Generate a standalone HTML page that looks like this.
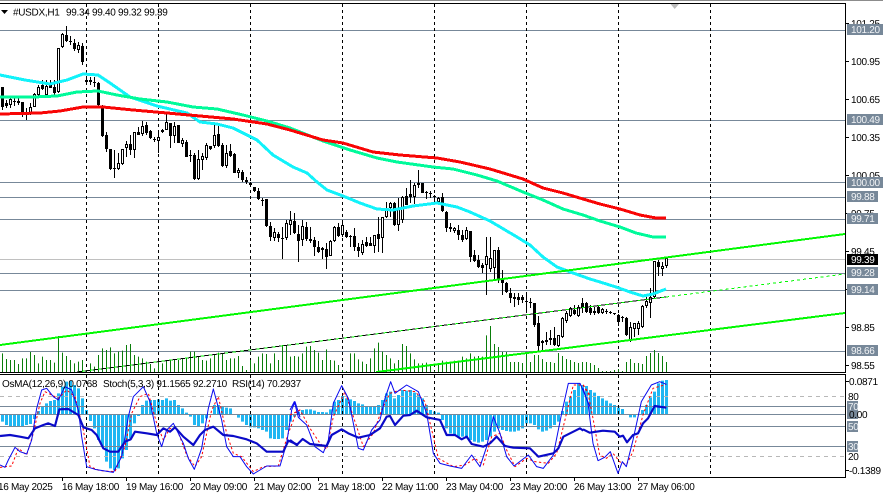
<!DOCTYPE html>
<html><head><meta charset="utf-8"><title>#USDX,H1</title>
<style>html,body{margin:0;padding:0;background:#fff;width:883px;height:494px;overflow:hidden}svg{display:block}text{font-family:"Liberation Sans",sans-serif;font-size:10px;letter-spacing:-.3px;fill:#000;text-rendering:geometricPrecision}.w{fill:#f2f4f6}.c{fill:none;stroke-linejoin:round}.e{shape-rendering:crispEdges}</style>
</head><body>
<svg width="883" height="494" viewBox="0 0 883 494" xmlns="http://www.w3.org/2000/svg">
<defs>
<clipPath id="m"><rect x="0" y="4" width="845" height="368"/></clipPath>
<clipPath id="s"><rect x="0" y="375" width="845" height="102"/></clipPath>
</defs>
<rect x="0" y="0" width="883" height="1" fill="#8c8c8c"/>

<!-- histogram -->
<g clip-path="url(#s)"><g transform="translate(0,340) scale(1,.33333)">
<path fill="none" stroke="#1fb6f2" stroke-width="3" d="M2.5 222V245M6.5 222V255M10.5 222V258M14.5 222V258M18.5 222V258M22.5 222V258M26.5 222V255M30.5 222V252M34.5 222V237M38.5 222V213M42.5 222V200M46.5 222V190M50.5 222V183M54.5 222V180M58.5 222V160M62.5 222V140M66.5 222V125M70.5 222V123M74.5 222V135M78.5 222V145M82.5 222V175M86.5 222V210M90.5 222V243M94.5 222V265M98.5 222V300M102.5 222V320M106.5 222V365M110.5 222V385M114.5 222V390M118.5 222V385M122.5 222V355M126.5 222V330M130.5 222V295M134.5 222V250M138.5 222V228M142.5 222V195M146.5 222V182M150.5 222V180M154.5 222V180M158.5 222V178M162.5 222V180M166.5 222V175M170.5 222V182M174.5 222V180M178.5 222V195M182.5 222V205M186.5 222V218M190.5 222V230M194.5 222V255M198.5 222V258M202.5 222V250M206.5 222V235M214.5 222V195M218.5 222V195M222.5 222V200M226.5 222V203M230.5 222V205M234.5 222V225M238.5 222V233M242.5 222V245M246.5 222V255M250.5 222V262M254.5 222V262M258.5 222V265M262.5 222V270M266.5 222V275M270.5 222V295M274.5 222V297M278.5 222V297M282.5 222V295M286.5 222V270M290.5 222V245M294.5 222V230M298.5 222V215M302.5 222V210M306.5 222V208M310.5 222V208M314.5 222V212M318.5 222V216M322.5 222V216M326.5 222V217M330.5 222V208M334.5 222V185M338.5 222V180M342.5 222V168M346.5 222V175M350.5 222V178M354.5 222V183M358.5 222V190M362.5 222V193M366.5 222V198M370.5 222V200M374.5 222V200M378.5 222V195M382.5 222V180M386.5 222V160M390.5 222V155M394.5 222V175M398.5 222V165M402.5 222V150M406.5 222V152M410.5 222V150M414.5 222V158M418.5 222V165M422.5 222V175M426.5 222V195M430.5 222V210M434.5 222V215M438.5 222V218M442.5 222V240M446.5 222V265M450.5 222V280M454.5 222V285M458.5 222V290M462.5 222V290M466.5 222V295M470.5 222V300M474.5 222V305M478.5 222V308M482.5 222V305M486.5 222V300M490.5 222V290M494.5 222V275M498.5 222V265M502.5 222V270M506.5 222V273M510.5 222V275M514.5 222V275M518.5 222V272M522.5 222V265M526.5 222V250M530.5 222V250M534.5 222V255M538.5 222V268M542.5 222V275M546.5 222V272M550.5 222V265M554.5 222V255M558.5 222V245M562.5 222V213M566.5 222V185M570.5 222V170M574.5 222V150M578.5 222V130M582.5 222V135M586.5 222V138M590.5 222V150M594.5 222V158M598.5 222V168M602.5 222V175M606.5 222V182M610.5 222V190M614.5 222V195M618.5 222V203M622.5 222V207M630.5 222V232M634.5 222V232M638.5 222V225M642.5 222V210M646.5 222V195M650.5 222V172M654.5 222V155M658.5 222V130M662.5 222V122M666.5 222V120"/>
</g></g>

<!-- horizontal levels -->
<g stroke="#778899" stroke-width="1" fill="none">
<path d="M0 30.5H845M0 120.5H845M0 182.5H845M0 197.5H845M0 219.5H845M0 273.5H845M0 290.5H845M0 351.5H845"/>
<path d="M0 406.5H845M0 414.5H845M0 426.5H845M0 446.5H845"/>
</g>
<path d="M0 259.5H845" stroke="#c0c0c0" stroke-width="1" fill="none"/>
<path d="M0 396.5H845M0 456.5H845" stroke="#b8b8b8" stroke-width="1" stroke-dasharray="4 4" fill="none"/>

<!-- vertical separators -->
<path d="M86.5 4V372M158.5 4V372M250.5 4V372M342.5 4V372M434.5 4V372M526.5 4V372M618.5 4V372M710.5 4V372M86.5 375V477M158.5 375V477M250.5 375V477M342.5 375V477M434.5 375V477M526.5 375V477M618.5 375V477M710.5 375V477" stroke="#000" stroke-width="1" stroke-dasharray="3 3" fill="none"/>

<!-- volumes -->
<g clip-path="url(#m)"><g transform="translate(0,340) scale(1,.33333)">
<path fill="none" stroke="#0a7d0a" stroke-width="1" d="M2.5 96V40M6.5 96V57M10.5 96V60M14.5 96V60M18.5 96V72M22.5 96V55M26.5 96V55M30.5 96V36M34.5 96V45M38.5 96V70M42.5 96V50M46.5 96V60M50.5 96V60M54.5 96V68M58.5 96V-12M62.5 96V38M66.5 96V48M70.5 96V60M74.5 96V70M78.5 96V65M82.5 96V60M86.5 96V93M90.5 96V70M94.5 96V80M98.5 96V45M102.5 96V25M106.5 96V30M110.5 96V22M114.5 96V40M118.5 96V35M122.5 96V32M126.5 96V15M130.5 96V12M134.5 96V45M138.5 96V50M142.5 96V55M146.5 96V65M150.5 96V72M154.5 96V85M158.5 96V62M162.5 96V70M166.5 96V62M170.5 96V60M174.5 96V58M178.5 96V60M182.5 96V55M186.5 96V55M190.5 96V35M194.5 96V35M198.5 96V48M202.5 96V60M206.5 96V62M210.5 96V55M214.5 96V42M218.5 96V38M222.5 96V40M226.5 96V60M230.5 96V55M234.5 96V55M238.5 96V48M242.5 96V78M246.5 96V90M250.5 96V60M254.5 96V70M258.5 96V50M262.5 96V40M266.5 96V42M270.5 96V70M274.5 96V40M278.5 96V60M282.5 96V15M286.5 96V15M290.5 96V50M294.5 96V48M298.5 96V50M302.5 96V40M306.5 96V20M310.5 96V18M314.5 96V30M318.5 96V38M322.5 96V60M326.5 96V28M330.5 96V60M334.5 96V62M338.5 96V75M342.5 96V90M346.5 96V93M350.5 96V40M354.5 96V40M358.5 96V58M362.5 96V65M366.5 96V72M370.5 96V55M374.5 96V25M378.5 96V8M382.5 96V35M386.5 96V45M390.5 96V55M394.5 96V70M398.5 96V60M402.5 96V12M406.5 96V18M410.5 96V40M414.5 96V58M418.5 96V70M422.5 96V70M426.5 96V68M430.5 96V72M434.5 96V93M438.5 96V75M442.5 96V62M446.5 96V65M450.5 96V65M454.5 96V62M458.5 96V65M462.5 96V50M466.5 96V55M470.5 96V40M474.5 96V50M478.5 96V48M482.5 96V50M486.5 96V-14M490.5 96V-42M494.5 96V12M498.5 96V21M502.5 96V36M506.5 96V36M510.5 96V66M514.5 96V66M518.5 96V66M522.5 96V69M526.5 96V36M530.5 96V66M534.5 96V45M538.5 96V45M542.5 96V57M546.5 96V66M550.5 96V66M554.5 96V69M558.5 96V39M562.5 96V48M566.5 96V57M570.5 96V60M574.5 96V66M578.5 96V69M582.5 96V66M586.5 96V66M590.5 96V69M594.5 96V75M598.5 96V84M602.5 96V93M606.5 96V93M610.5 96V93M614.5 96V90M618.5 96V87M622.5 96V93M626.5 96V66M630.5 96V57M634.5 96V69M638.5 96V69M642.5 96V72M646.5 96V48M650.5 96V39M654.5 96V30M658.5 96V39M662.5 96V48M666.5 96V66"/>
</g>

<!-- candles -->
<g transform="translate(.5,0)">
<path fill="none" stroke="#000" stroke-width="1" d="M2 87V110M6 100V108M10 98V108M14 98V106M18 98V105M22 102V117M26 108V120M30 103V115M34 93V107M38 85V97M42 80V90M46 80V97M50 80V88M54 80V95M58 48V93M62 33V48M66 26V42M70 36V45M74 39V51M78 42V53M82 43V65M86 78V83M90 77V85M94 77V87M98 82V107M102 105V137M106 132V152M110 149V170M114 150V178M118 153V170M122 149V165M126 141V157M130 135V155M134 132V158M138 127V135M142 121V136M146 122V135M150 130V139M154 137V142M158 132V153M162 129V133M166 113V130M170 123V148M174 122V143M178 125V143M182 138V147M186 140V157M190 150V162M194 153V180M198 150V180M202 153V170M206 143V160M210 146V150M214 125V148M218 125V147M222 143V167M226 145V168M230 144V157M234 153V173M238 168V178M242 170V182M246 177V184M250 182V187M254 187V192M258 188V200M262 198V206M266 199V227M270 222V241M274 228V241M278 232V242M282 227V259M286 220V240M290 211V235M294 213V234M298 225V262M302 220V246M306 222V241M310 227V243M314 237V256M318 241V253M322 247V259M326 243V269M330 240V256M334 226V242M338 223V237M342 222V237M346 230V238M350 235V247M354 228V251M358 243V257M362 240V255M366 237V247M370 237V246M374 235V253M378 217V252M382 217V253M386 202V218M390 202V217M394 202V226M398 198V231M402 196V223M406 188V205M410 180V203M414 183V204M418 170V188M422 183V193M426 191V199M430 191V198M434 195V203M438 197V203M442 193V212M446 211V232M450 223V232M454 227V233M458 225V240M462 230V242M466 227V240M470 231V262M474 250V262M478 255V268M482 263V273M486 237V295M490 237V272M494 250V280M498 247V283M502 270V295M506 282V293M510 288V303M514 293V307M518 293V305M522 295V303M526 292V310M530 298V308M534 303V327M538 316V351M542 340V351M546 332V345M550 330V345M554 327V346M558 335V347M562 317V338M566 311V323M570 307V317M574 305V315M578 305V317M582 298V313M586 302V313M590 305V315M594 307V315M598 306V314M602 308V314M606 309V314M610 311V314M614 313V315M618 314V326M622 316V322M626 317V336M630 322V342M634 323V337M638 321V335M642 305V328M646 297V308M650 288V318M654 261V298M658 260V276M662 262V276M666 258V268"/>
<path fill="none" stroke="#000" stroke-width="3" d="M2 87V107M6 103V106M10 99V105M14 101V102M18 101V103M22 102V113M26 113V114M30 107V113M34 94V107M38 87V95M42 85V89M46 86V95M50 85V88M54 87V93M58 48V92M62 34V47M66 35V41M70 41V42M74 43V49M78 45V50M82 46V62M86 80V82M90 80V82M94 82V83M98 83V105M102 108V136M106 135V149M110 149V169M114 168V169M118 163V169M122 149V164M126 144V148M130 144V150M134 132V150M138 132V135M142 126V134M146 125V133M150 131V138M154 139V140M158 137V141M162 130V132M166 122V130M170 123V136M174 126V136M178 125V143M182 140V144M186 142V157M190 155V156M194 155V179M198 159V179M202 156V160M206 145V158M210 146V149M214 135V146M218 134V146M222 145V166M226 153V166M230 151V156M234 154V173M238 170V173M242 172V180M246 180V182M250 183V185M254 187V191M258 191V199M262 200V201M266 199V226M270 226V237M274 232V238M278 234V238M282 238V239M286 223V238M290 220V225M294 221V233M298 234V241M302 226V240M306 227V239M310 239V241M314 240V247M318 247V252M322 248V250M326 249V257M330 241V256M334 227V241M338 227V236M342 225V235M346 232V237M350 236V237M354 236V247M358 247V251M362 244V253M366 242V246M370 243V246M374 235V246M378 234V239M382 217V238M386 208V217M390 203V208M394 203V225M398 208V225M402 197V220M406 196V205M410 194V197M414 185V197M418 183V185M422 183V193M426 192V193M430 193V194M434 196V197M438 198V202M442 197V211M446 212V228M450 227V229M454 228V231M458 230V235M462 235V240M466 230V239M470 231V257M474 255V261M478 260V267M482 265V268M486 256V265M490 258V269M494 250V268M498 250V279M502 279V283M506 283V292M510 293V298M514 297V299M518 297V300M522 297V300M526 301V302M530 302V303M534 303V325M538 323V346M542 341V343M546 340V342M550 338V340M554 338V345M558 335V346M562 318V337M566 313V321M570 308V316M574 310V314M578 307V316M582 303V308M586 303V312M590 308V313M594 311V313M598 307V313M602 309V313M606 311V312M610 312V313M614 313V314M618 315V322M622 317V318M626 318V335M630 327V340M634 323V329M638 323V329M642 306V327M646 301V306M650 297V303M654 261V297M658 262V267M662 266V269M666 258V266"/>
<path fill="none" stroke="#fff" stroke-width="1" d="M10 100V104M30 108V112M34 95V106M38 88V94M46 87V94M58 49V91M62 35V46M78 46V49M118 164V168M122 150V163M126 145V147M134 133V149M142 127V133M158 138V140M166 123V129M174 127V135M182 141V143M198 160V178M202 157V159M206 146V157M214 136V145M226 154V165M238 171V172M274 233V237M286 224V237M290 221V224M302 227V239M330 242V255M334 228V240M342 226V234M362 245V252M374 236V245M382 218V237M386 209V216M390 204V207M398 209V224M402 198V219M414 186V196M438 199V201M454 229V230M466 231V238M486 257V264M490 259V268M494 251V267M558 336V345M562 319V336M566 314V320M570 309V315M578 308V315M602 310V312M630 328V339M634 324V328M638 324V328M642 307V326M646 302V305M650 298V302M654 262V296M662 267V268M666 259V265"/>
</g>

<!-- moving averages -->
<polyline class="c e" stroke="#12f2fa" stroke-width="3" points="0,75 25,80 50,84 67,80 83,74 98,75 110,83 130,97 157,106 187,113 200,122 217,124 233,128 257,140 273,155 293,167 307,173 317,182 327,190 343,196 360,203 377,209 393,210 413,206 437,203 457,207 470,212 490,221 517,237 530,245 543,257 557,267 573,273 590,279 600,282 616,287 630,292 643,296 653,294 666,289"/>
<polyline class="c e" stroke="#00fa9a" stroke-width="3" points="0,97 33,97 57,96 77,92 98,91 117,95 140,99 167,102 193,107 217,109 243,115 267,121 290,128 323,141 350,150 377,158 397,162 433,167 453,169 477,175 497,181 523,192 543,200 563,209 583,215 600,221 620,227 636,233 653,237 666,237"/>
<polyline class="c e" stroke="#f80505" stroke-width="3" points="0,114 40,113 60,111 83,107 103,107 133,110 167,113 200,116 233,119 267,124 290,130 323,140 343,143 373,152 400,155 437,158 460,162 490,169 523,179 543,188 563,193 583,199 600,204 620,209 640,215 656,218 666,218"/>

<!-- channel -->
<path class="e" d="M0 345L845 234M376 372L845 313" stroke="#00f800" stroke-width="2" fill="none"/>
<path class="e" d="M77 372L666 297" stroke="#00f800" stroke-width="1" fill="none"/>
<path class="e" d="M77 372L666 297" stroke="#000" stroke-width="1" stroke-dasharray="5 3" fill="none"/>
<path class="e" d="M666 297L845 274" stroke="#00f800" stroke-width="1" stroke-dasharray="3 3" fill="none"/>
</g>

<!-- oscillators -->
<g clip-path="url(#s)">
<g transform="translate(0,340) scale(.33333)">
<polyline class="c" stroke="#f00" stroke-width="3" stroke-dasharray="7 7" points="0,382 35,378 55,325 80,345 100,280 120,190 135,155 175,175 200,150 225,170 250,270 270,380 300,392 345,395 375,320 395,220 420,170 445,160 470,250 490,300 510,265 530,265 560,345 585,380 605,350 635,210 655,170 680,280 700,340 725,350 760,395 790,380 835,378 865,280 890,215 900,210"/>
<polyline class="c" stroke="#0808f0" stroke-width="3" points="0,375 15,382 25,360 45,322 60,335 80,342 95,300 110,205 125,150 140,145 160,170 175,180 195,140 215,150 235,210 245,290 260,380 285,388 340,397 365,350 385,230 400,170 430,140 450,185 470,280 485,320 500,270 520,250 550,310 565,355 583,388 605,325 625,205 640,147 665,240 680,320 700,350 720,350 740,380 760,402 780,390 800,378 840,378 860,310 875,210 885,185 900,232"/>
<polyline class="c" stroke="#0a0ac8" stroke-width="6.5" points="0,288 30,285 60,290 85,295 105,265 130,255 145,250 165,258 178,208 205,207 235,225 250,262 275,270 290,285 310,325 330,335 355,335 375,305 392,298 405,275 440,280 470,285 490,265 510,275 525,262 550,290 580,315 600,285 615,270 640,260 670,285 700,288 740,298 770,310 800,335 850,335 865,302 895,315"/>
</g>
<g transform="translate(290,340) scale(.33333)">
<polyline class="c" stroke="#f00" stroke-width="3" stroke-dasharray="7 7" points="0,225 30,210 60,265 90,310 110,328 130,230 165,155 190,230 220,320 250,280 275,210 300,160 330,150 375,155 405,185 430,290 445,355 490,380 525,375 555,355 580,375 605,290 630,280 650,330 675,380 710,355 735,365 775,370 800,340 820,260 850,135 880,135 900,165"/>
<polyline class="c" stroke="#0808f0" stroke-width="3" points="0,210 13,185 25,232 50,255 75,320 100,338 115,300 130,190 155,137 175,175 190,250 205,325 220,330 245,270 270,240 285,175 302,125 315,160 350,135 385,155 410,220 430,340 450,370 480,378 515,385 545,345 570,380 590,320 610,230 630,280 650,350 672,378 715,345 740,380 760,385 790,345 815,220 835,130 870,130 900,200"/>
<polyline class="c" stroke="#0a0ac8" stroke-width="6.5" points="0,300 20,315 38,297 60,312 110,318 125,285 155,268 175,280 205,293 240,285 270,265 290,230 300,228 315,255 340,227 360,225 380,212 410,232 450,240 470,285 495,285 515,298 530,290 545,312 580,320 600,310 620,290 645,318 670,323 720,325 745,350 790,340 805,325 820,290 870,265 880,272"/>
</g>
<g transform="translate(583,340) scale(.33333)">
<polyline class="c" stroke="#f00" stroke-width="3" stroke-dasharray="7 7" points="0,135 15,160 30,235 50,345 70,355 90,340 110,365 130,375 150,335 180,225 210,145 250,133"/>
<polyline class="c" stroke="#0808f0" stroke-width="3" points="0,145 15,190 30,310 45,362 65,352 82,335 105,400 118,365 130,380 150,300 175,185 205,135 230,125 250,133"/>
<polyline class="c" stroke="#0a0ac8" stroke-width="6.5" points="0,268 20,278 60,272 95,275 110,290 120,287 132,307 150,285 165,280 180,250 195,235 215,198 250,203"/>
</g>
</g>

<!-- frames -->
<g stroke="#000" stroke-width="1" fill="none">
<path d="M0 3.5H845.5V372.5H0M0 374.5H845.5V477.5H0"/>
<path d="M845 23.5H849M845 61.5H849M845 99.5H849M845 137.5H849M845 175.5H849M845 213.5H849M845 251.5H849M845 289.5H849M845 327.5H849M845 365.5H849M845 381.5H849M845 470.5H849"/>
<path d="M62.5 477V481M126.5 477V481M190.5 477V481M254.5 477V481M318.5 477V481M382.5 477V481M446.5 477V481M510.5 477V481M574.5 477V481M638.5 477V481"/>
</g>

<!-- header -->
<path d="M1 10H8L4.5 14Z" fill="#000"/>
<text x="13" y="15.5">#USDX,H1</text>
<text x="66" y="15.5">99.34 99.40 99.32 99.39</text>
<path d="M670.5 4H679L674.7 9Z" fill="#bcbcbc"/>
<text x="2" y="387">OsMA(12,26,9) 0.0768</text>
<text x="103" y="387">Stoch(5,3,3) 91.1565 92.2710</text>
<text x="232" y="387">RSI(14) 70.2937</text>

<!-- price axis -->
<text x="851" y="27">101.25</text>
<text x="851" y="65">100.95</text>
<text x="851" y="103">100.65</text>
<text x="851" y="141">100.35</text>
<text x="851" y="179">100.05</text>
<text x="851" y="217">99.75</text>
<text x="851" y="255">99.45</text>
<text x="851" y="293">99.15</text>
<text x="851" y="331">98.85</text>
<text x="851" y="369">98.55</text>

<g fill="#778899">
<rect x="847" y="24" width="36" height="11"/>
<rect x="847" y="114" width="36" height="11"/>
<rect x="847" y="177" width="36" height="11"/>
<rect x="847" y="191" width="31" height="11"/>
<rect x="847" y="213" width="31" height="11"/>
<rect x="847" y="267" width="31" height="11"/>
<rect x="847" y="284" width="31" height="11"/>
<rect x="847" y="345" width="31" height="11"/>
<rect x="847" y="401" width="11" height="10"/>
<rect x="847" y="409" width="11" height="10"/>
<rect x="847" y="421" width="11" height="11"/>
<rect x="847" y="441" width="11" height="11"/>
</g>
<rect x="847" y="254" width="31" height="11" fill="#000"/>
<text class="w" x="851" y="33">101.20</text>
<text class="w" x="851" y="123">100.49</text>
<text class="w" x="851" y="186">100.00</text>
<text class="w" x="851" y="200">99.88</text>
<text class="w" x="851" y="222">99.71</text>
<text x="851" y="263" style="fill:#fff">99.39</text>
<text class="w" x="851" y="276">99.28</text>
<text class="w" x="851" y="293">99.14</text>
<text class="w" x="851" y="354">98.66</text>

<!-- indicator axis -->
<text x="849" y="385">0.0871</text>
<text x="848" y="400">80</text>
<text class="w" x="848" y="410">70</text>
<text x="849" y="418">0.00</text>
<text class="w" x="848" y="430">50</text>
<text class="w" x="848" y="450">30</text>
<text x="848" y="460">20</text>
<text x="849" y="474">-0.1389</text>

<!-- time axis -->
<text x="-2" y="490">16 May 2025</text>
<text x="62" y="490">16 May 18:00</text>
<text x="126" y="490">19 May 16:00</text>
<text x="190" y="490">20 May 09:00</text>
<text x="254" y="490">21 May 02:00</text>
<text x="318" y="490">21 May 18:00</text>
<text x="382" y="490">22 May 11:00</text>
<text x="446" y="490">23 May 04:00</text>
<text x="510" y="490">23 May 20:00</text>
<text x="574" y="490">26 May 13:00</text>
<text x="637.5" y="490">27 May 06:00</text>
</svg>
</body></html>
